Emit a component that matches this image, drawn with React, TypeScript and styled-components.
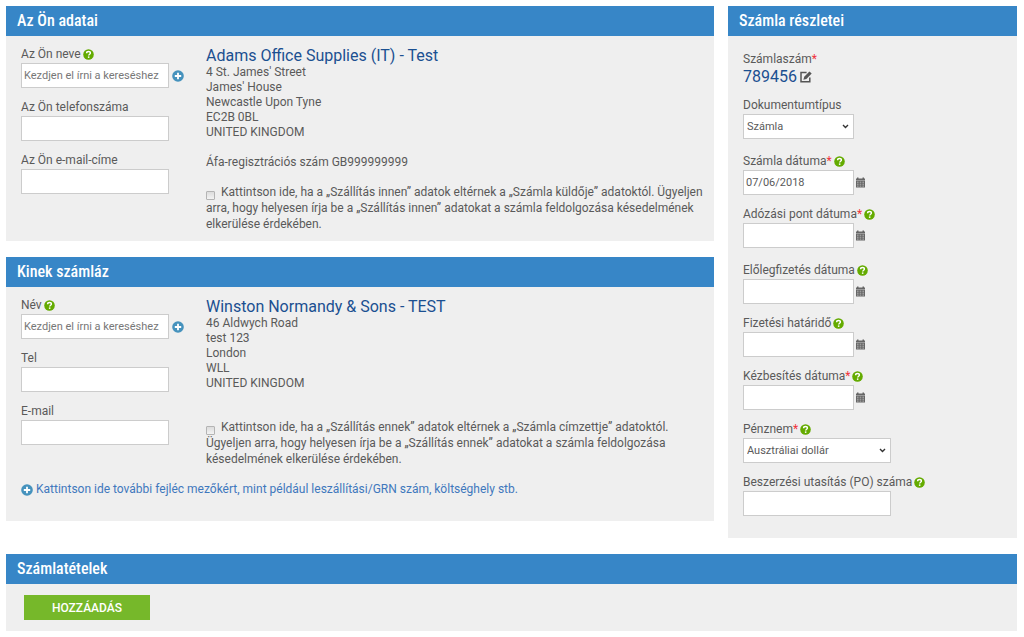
import React, { useId } from 'react';
import styled, { createGlobalStyle } from 'styled-components';

const GlobalStyle = createGlobalStyle`
  * { box-sizing: border-box; }
  body {
    margin: 0;
    background: #fff;
    color: #5a5a5a;
    font: 12px/15px Roboto, "Liberation Sans", sans-serif;
  }
  input, select, button { font-family: inherit; color: inherit; margin: 0; }
`;

const Page = styled.main`
  padding: 6px 7px 6px 6px;
  display: grid;
  grid-template-columns: minmax(0, 708fr) minmax(0, 289fr);
  column-gap: 14px;
  row-gap: 16px;
  align-items: start;
`;

const Stack = styled.div`
  display: flex;
  flex-direction: column;
  gap: 16px;
`;

const Panel = styled.section<{ $wide?: boolean }>`
  background: #efefef;
  grid-column: ${p => (p.$wide ? '1 / -1' : 'auto')};
`;

const PanelTitle = styled.h2`
  margin: 0;
  padding: 0 11px;
  background: #3786c7;
  color: #fff;
  font: 500 16px/30px "Roboto Condensed", "Liberation Sans Narrow", Roboto, sans-serif;
`;

const Party = styled.div`
  display: grid;
  grid-template-columns: 170px minmax(0, 1fr);
  column-gap: 15px;
  padding: 10px 8px 9px 15px;
`;

const Fields = styled.div`
  display: flex;
  flex-direction: column;
  gap: 11px;
`;

const Groups = styled.div`
  display: flex;
  flex-direction: column;
  gap: 14px;
  padding: 15px 15px 22px;
`;

const FieldBox = styled.div`
  display: flex;
  flex-direction: column;
`;

const LabelRow = styled.div`
  display: flex;
  align-items: center;
  gap: 2px;
  height: 17px;
`;

const Required = styled.span`
  color: #f0323c;
`;

const Control = styled.div<{ $gap: number }>`
  display: flex;
  align-items: center;
  gap: ${p => p.$gap}px;
`;

const TextInput = styled.input<{ $narrow?: boolean }>`
  width: ${p => (p.$narrow ? 111 : 148)}px;
  height: 25px;
  padding: 0 2px;
  border: 1px solid #ccc;
  background: #fff;
  font-size: 11px;
  &::placeholder { color: #777; opacity: 1; }
`;

const SelectBox = styled.div<{ $narrow?: boolean }>`
  position: relative;
  width: ${p => (p.$narrow ? 111 : 148)}px;
  height: 25px;

  svg {
    position: absolute;
    top: 10px;
    right: 5px;
    pointer-events: none;
  }
`;

const Select = styled.select`
  appearance: none;
  display: block;
  width: 100%;
  height: 100%;
  padding: 0 16px 0 3px;
  border: 1px solid #ccc;
  border-radius: 0;
  background: #fff;
  font-size: 11px;
`;

const IconButton = styled.button`
  display: flex;
  padding: 0;
  border: 0;
  background: none;
  cursor: pointer;
`;

const Name = styled.h3`
  margin: 0;
  color: #1b5091;
  font-size: 16px;
  font-weight: 400;
  line-height: 19px;
`;

const Address = styled.address`
  font-style: normal;
  white-space: pre-line;
`;

const Vat = styled.p`
  margin: 15px 0 0;
`;

const Notice = styled.label<{ $space: number }>`
  display: block;
  margin-top: ${p => p.$space}px;
  line-height: 16px;
`;

const Checkbox = styled.input`
  && {
    appearance: none;
    width: 9px;
    height: 9px;
    margin: 0 6px 0 0;
    vertical-align: -4px;
    border: 1px solid #b4b4b4;
    border-radius: 1px;
    background: linear-gradient(#dcdcdc, #f3f3f3);
  }
`;

const MoreLink = styled.a`
  display: flex;
  align-items: center;
  gap: 3px;
  margin: 6px 15px 0;
  padding-bottom: 24px;
  color: #3f78bd;
  text-decoration: none;
`;

const InvoiceNumber = styled.div`
  display: flex;
  align-items: center;
  gap: 3px;
  color: #1b5091;
  font-size: 16px;
  line-height: 18px;
`;

const Actions = styled.div`
  padding: 11px 18px;
`;

const AddButton = styled.button`
  display: block;
  width: 126px;
  height: 25px;
  padding: 0;
  border: 0;
  background: #76b82a;
  color: #fff;
  font-size: 12px;
  font-weight: 500;
`;

const HelpIcon = () => (
  <svg width="11" height="11" viewBox="0 0 11 11" aria-hidden="true">
    <circle cx="5.5" cy="5.5" r="5.3" fill="#64ab00" />
    <path d="M3.6 4.2C3.6 3 4.4 2.5 5.5 2.5s1.9.6 1.9 1.6c0 1.2-1.7 1.2-1.7 2.5" fill="none" stroke="#fff" strokeWidth="1.4" />
    <rect x="4.9" y="7.4" width="1.5" height="1.5" fill="#fff" />
  </svg>
);

const PlusIcon = () => (
  <svg width="12" height="12" viewBox="0 0 12 12" aria-hidden="true">
    <circle cx="6" cy="6" r="5.8" fill="#4592bd" />
    <path d="M6 2.8v6.4M2.8 6h6.4" stroke="#fff" strokeWidth="1.8" />
  </svg>
);

const CalendarIcon = () => (
  <svg width="9" height="11" viewBox="0 0 9 11" aria-hidden="true">
    <path d="M0 1.5h1V.5h1.5v1h4V.5H8v1h1v9H0z" fill="#666" />
    <path d="M0 3.5h9" stroke="#a8a8a8" strokeWidth=".8" />
    <path d="M1 5.2h1.6M3.7 5.2h1.6M6.4 5.2H8M1 7.2h1.6M3.7 7.2h1.6M6.4 7.2H8M1 9.1h1.6M3.7 9.1h1.6M6.4 9.1H8" stroke="#bdbdbd" strokeWidth=".9" />
  </svg>
);

const EditIcon = () => (
  <svg width="12" height="12" viewBox="0 0 12 12" aria-hidden="true">
    <path d="M6.6 1.4H1v9.4h8.8V6.6" fill="none" stroke="#555" strokeWidth="1.5" />
    <path d="M3.4 8.8l.8-3.1L9.4.4l2.3 2.2-5.3 5.3z" fill="#555" />
  </svg>
);

const ChevronIcon = () => (
  <svg width="7" height="5" viewBox="0 0 7 5" aria-hidden="true">
    <path d="M1 1l2.5 2.5L6 1" fill="none" stroke="#333" strokeWidth="1.4" />
  </svg>
);

type FieldProps = {
  label: string;
  required?: boolean;
  help?: boolean;
  search?: boolean;
  date?: boolean;
  value?: string;
  options?: string[];
  narrow?: boolean;
};

function Field({ label, required, help, search, date, value, options, narrow }: FieldProps) {
  const id = useId();
  return (
    <FieldBox>
      <LabelRow>
        <label htmlFor={id}>
          {label}
          {required && <Required>*</Required>}
        </label>
        {help && <HelpIcon />}
      </LabelRow>
      <Control $gap={date ? 2 : 3}>
        {options ? (
          <SelectBox $narrow={narrow}>
            <Select id={id}>
              {options.map(o => <option key={o}>{o}</option>)}
            </Select>
            <ChevronIcon />
          </SelectBox>
        ) : (
          <TextInput
            id={id}
            type="text"
            $narrow={date}
            defaultValue={value}
            placeholder={search ? 'Kezdjen el írni a kereséshez' : undefined}
          />
        )}
        {search && <IconButton type="button" aria-label={label}><PlusIcon /></IconButton>}
        {date && <IconButton type="button" aria-label={label}><CalendarIcon /></IconButton>}
      </Control>
    </FieldBox>
  );
}

export default function App() {
  return (
    <>
      <GlobalStyle />
      <Page>
        <Stack>
          <Panel>
            <PanelTitle>Az Ön adatai</PanelTitle>
            <Party>
              <Fields>
                <Field label="Az Ön neve" help search />
                <Field label="Az Ön telefonszáma" />
                <Field label="Az Ön e-mail-címe" />
              </Fields>
              <div>
                <Name>Adams Office Supplies (IT) - Test</Name>
                <Address>{"4 St. James' Street\nJames' House\nNewcastle Upon Tyne\nEC2B 0BL\nUNITED KINGDOM"}</Address>
                <Vat>Áfa-regisztrációs szám GB999999999</Vat>
                <Notice $space={14}>
                  <Checkbox type="checkbox" />
                  Kattintson ide, ha a „Szállítás innen” adatok eltérnek a „Számla küldője” adatoktól. Ügyeljen arra, hogy helyesen írja be a „Szállítás innen” adatokat a számla feldolgozása késedelmének elkerülése érdekében.
                </Notice>
              </div>
            </Party>
          </Panel>
          <Panel>
            <PanelTitle>Kinek számláz</PanelTitle>
            <Party>
              <Fields>
                <Field label="Név" help search />
                <Field label="Tel" />
                <Field label="E-mail" />
              </Fields>
              <div>
                <Name>Winston Normandy &amp; Sons - TEST</Name>
                <Address>{'46 Aldwych Road\ntest 123\nLondon\nWLL\nUNITED KINGDOM'}</Address>
                <Notice $space={28}>
                  <Checkbox type="checkbox" />
                  Kattintson ide, ha a „Szállítás ennek” adatok eltérnek a „Számla címzettje” adatoktól. Ügyeljen arra, hogy helyesen írja be a „Szállítás ennek” adatokat a számla feldolgozása késedelmének elkerülése érdekében.
                </Notice>
              </div>
            </Party>
            <MoreLink href="#">
              <PlusIcon />
              Kattintson ide további fejléc mezőkért, mint például leszállítási/GRN szám, költséghely stb.
            </MoreLink>
          </Panel>
        </Stack>
        <Panel>
          <PanelTitle>Számla részletei</PanelTitle>
          <Groups>
            <Fields>
              <div>
                <LabelRow><span>Számlaszám<Required>*</Required></span></LabelRow>
                <InvoiceNumber>
                  789456
                  <IconButton type="button" aria-label="Számlaszám"><EditIcon /></IconButton>
                </InvoiceNumber>
              </div>
              <Field label="Dokumentumtípus" options={['Számla']} narrow />
            </Fields>
            <Fields>
              <Field label="Számla dátuma" required help date value="07/06/2018" />
              <Field label="Adózási pont dátuma" required help date />
            </Fields>
            <Fields>
              <Field label="Előlegfizetés dátuma" help date />
              <Field label="Fizetési határidő" help date />
              <Field label="Kézbesítés dátuma" required help date />
              <Field label="Pénznem" required help options={['Ausztráliai dollár']} />
              <Field label="Beszerzési utasítás (PO) száma" help />
            </Fields>
          </Groups>
        </Panel>
        <Panel $wide>
          <PanelTitle>Számlatételek</PanelTitle>
          <Actions>
            <AddButton type="button">HOZZÁADÁS</AddButton>
          </Actions>
        </Panel>
      </Page>
    </>
  );
}
